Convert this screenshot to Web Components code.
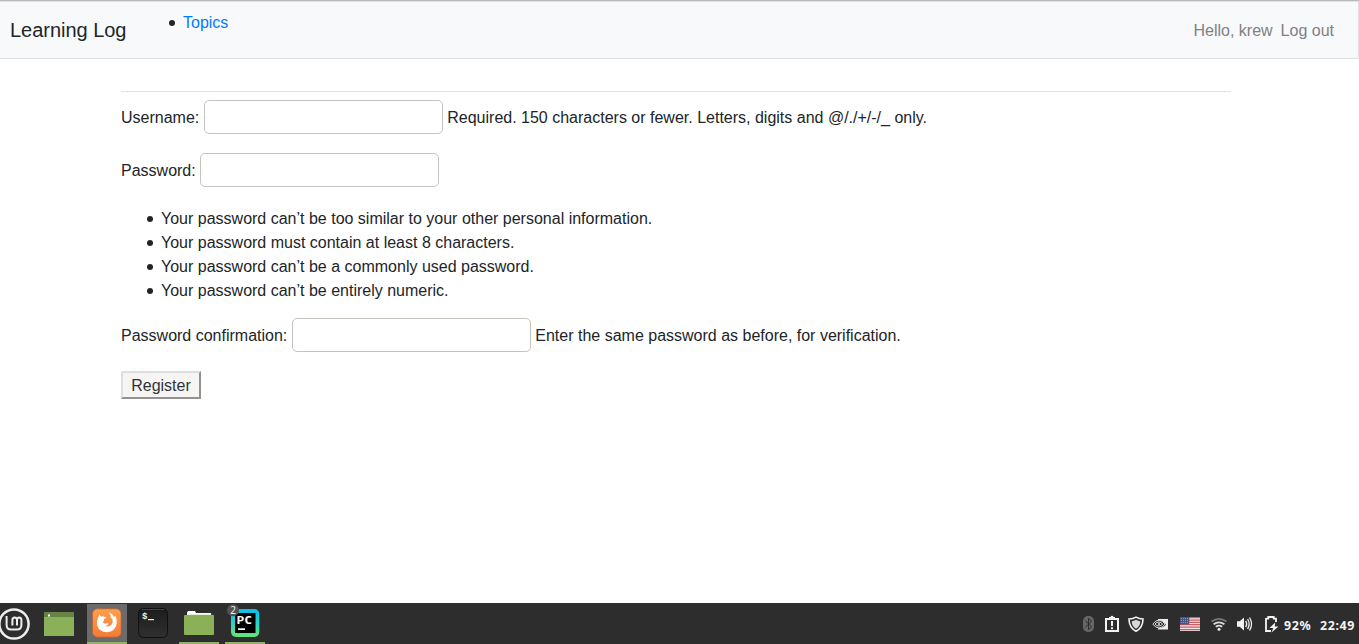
<!DOCTYPE html>
<html lang="en">
<head>
<meta charset="utf-8">
<title>Learning Log</title>
<style>
html,body{margin:0;height:100%;overflow:hidden;background:#fff}
body{font:16px/24px "Liberation Sans",Arial,sans-serif;color:#212529}
</style>
</head>
<body>
<app-desktop></app-desktop>
<script>
const define = (name, html, setup) => customElements.define(name, class extends HTMLElement {
  constructor() {
    super();
    const t = document.createElement('template');
    t.innerHTML = html;
    this.attachShadow({mode: 'open'}).append(t.content.cloneNode(true));
  }
  connectedCallback() { if (setup) setup(this, this.shadowRoot); }
});

const bullets = `li{list-style:none}
li::before{content:"";display:inline-block;width:6px;height:6px;border-radius:50%;background:#212529;margin:0 8px 0 -14px;vertical-align:2px}`;

define('nav-bar', `<style>
:host{display:flex;box-sizing:border-box;height:58px;background:#f8f9fa;border:1px solid #dee2e6;border-left:0;padding:8px 24px 8px 10px}
.brand{font-size:20px;line-height:30px;padding-top:5px;width:117px;white-space:nowrap;letter-spacing:-.03px}
ul{margin:1px 0 0 16px;padding:0 0 0 40px}
${bullets}
a{color:#007bff;text-decoration:none}
.user{margin-left:auto;display:flex;gap:8px;padding-top:9px;color:#808182}
</style>
<span class="brand">Learning Log</span>
<ul><li><a>Topics</a></li></ul>
<div class="user"><span>Hello, krew</span><span>Log out</span></div>`);

define('form-row', `<style>
:host{display:flex;align-items:center;height:34px;gap:4.5px;margin-bottom:19px;white-space:nowrap}
label,span{padding-top:2px}
input{box-sizing:border-box;width:239px;height:34px;margin:0;border:1px solid #c6c2bd;border-radius:5px;background:#fff;font:inherit;padding:0 6px;flex:none}
</style><label></label><input><span><slot></slot></span>`, (h, r) => {
  r.querySelector('label').textContent = h.getAttribute('label');
});

define('register-form', `<style>
:host{display:block;width:1110px;margin:32px 0 0 121px}
hr{margin:0 0 8px;border:0;border-top:1px solid #e0e0e0}
ul{margin:20px 0 15px;padding:0 0 0 40px}
${bullets}
form-row.tight{margin-bottom:0}
button{display:block;box-sizing:border-box;width:80px;height:28px;padding:1px 0 0;border:2px solid;border-color:#dedede #929292 #929292 #dedede;background:#f6f5f4;color:#2e3436;font:16px/23px "Liberation Sans",Arial,sans-serif}
</style>
<hr>
<form-row label="Username:">Required. 150 characters or fewer. Letters, digits and @/./+/-/_ only.</form-row>
<form-row class="tight" label="Password:"></form-row>
<ul>
<li>Your password can’t be too similar to your other personal information.</li>
<li>Your password must contain at least 8 characters.</li>
<li>Your password can’t be a commonly used password.</li>
<li>Your password can’t be entirely numeric.</li>
</ul>
<form-row label="Password confirmation:">Enter the same password as before, for verification.</form-row>
<button type="button">Register</button>`);

define('task-button', `<style>
:host{display:flex;flex:none;box-sizing:border-box;width:40px;height:40px;margin-top:1px}
:host([open]){border-bottom:2px solid #8fb368}
:host([active]){background:#6b6b6b}
</style><slot></slot>`);

define('task-bar', `<style>
:host{display:flex;height:41px;background:#2d2d2d;color:#fff;overflow:hidden}
svg{display:block;flex:none}
.apps{display:flex;gap:6px}
.menu{display:flex;width:81px;gap:14px}
.tray{display:flex;margin-left:auto;padding-right:4px}
.txt{font:bold 12.4px/41px "Noto Sans",sans-serif;padding-top:2px;white-space:nowrap;color:#f4f4f4;letter-spacing:.65px}
.pct{width:36px}.time{width:35px}
</style>
<div class="apps">
<div class="menu">
<svg width="30" height="41" viewBox="0 603 30 41" fill="none" stroke="#ededed"><circle cx="14" cy="624" r="14.6" stroke-width="2.5"/><path d="M6.6 616v9q0 4.5 4.5 4.5h5.8q4.5 0 4.5-4.5v-5q0-2.6-2.2-2.6t-2.2 2.6v5.5M17 620q0-2.6-2.3-2.6t-2.3 2.6v5.5" stroke-width="2"/></svg>
<svg width="30" height="41" viewBox="44 603 30 41"><path fill="#8bb158" d="M44 612h30v24H44z"/><path fill="#668344" d="M44 612h30v5H44z"/><path fill="#fff" d="M48 614.5h2v2h-2z"/></svg>
</div>
<task-button active open><svg width="40" height="38" viewBox="87 604 40 38"><defs><linearGradient id="f" x2="0" y2="1"><stop stop-color="#ffa04d"/><stop offset="1" stop-color="#f47b35"/></linearGradient></defs><rect x="92.5" y="608.8" width="28.6" height="28.4" rx="5" fill="url(#f)" stroke="#b85f2d" stroke-width=".7"/><path fill="#fff" d="M98.2 617.5l1.3-3 1.6 2.2q1.5-.7 3 .1l2.1.2q-.3 1.5-2.4 2.2l.3 1.4q-1.6.8-.9 2.2 1 1.2 3.3.4 1.6-.5 2.1.7-1.5 2-3.7 2.2 4 1.5 6.7-1.6 2-2.8.6-6.1l-1.4-.2q.5-3.1-1.9-5.6 3.5.8 5.4 4.3l1-1.5q2 3.8 1.5 8-1.5 8.3-9.8 8.8-8.4-.2-10-7.5-.6-4 1.2-7.2z"/></svg></task-button>
<task-button><svg width="40" height="40" viewBox="133 604 40 40"><defs><linearGradient id="t" x2="0" y2="1"><stop stop-color="#1c1c1c"/><stop offset="1" stop-color="#303030"/></linearGradient></defs><rect x="138.5" y="608.5" width="29" height="29" rx="5" fill="url(#t)" stroke="#101010"/><path d="M142 609.5h22" stroke="#4b4b4b" stroke-width=".8"/><text x="142" y="618.5" fill="#eee" font-family="Liberation Mono,monospace" font-weight="bold" font-size="9">$</text><path fill="#eee" d="M148 619h6v1.2h-6z"/></svg></task-button>
<task-button open><svg width="40" height="38" viewBox="179 604 40 38"><path fill="#fff" d="M187 618v-5.5l1-1.5h7l1 2h15v5z"/><path fill="#8bb158" d="M184 616q0-1 1-1h4l1.5-.3H213l1 .8v18.7q0 .8-1 .8h-28q-1 0-1-.8z"/></svg></task-button>
<task-button open><svg width="40" height="38" viewBox="225 604 40 38"><defs><linearGradient id="p" x2="0" y2="1"><stop stop-color="#0bbdf1"/><stop offset=".45" stop-color="#20d1ca"/><stop offset="1" stop-color="#65e674"/></linearGradient></defs><rect x="231" y="609" width="28.3" height="28" rx="5" fill="url(#p)"/><path d="M235 613h20.5v20H235z"/><text x="236.5" y="624" textLength="15.5" lengthAdjust="spacingAndGlyphs" fill="#fff" font-family="DejaVu Sans Mono,monospace" font-weight="bold" font-size="11">PC</text><path fill="#fff" d="M238 628.3h7v1.7h-7z"/><circle cx="233" cy="610.2" r="6" fill="#525252"/><text x="233" y="613.7" text-anchor="middle" fill="#eee" font-family="Noto Sans,sans-serif" font-size="10">2</text></svg></task-button>
</div>
<div class="tray">
<svg width="24" height="41" viewBox="1076 603 24 41"><rect x="1083" y="616" width="11" height="16" rx="5" fill="#666"/><path d="M1085.5 620.8l6 6-3 3v-11.6l3 3-6 6" fill="none" stroke="#2d2d2d"/></svg>
<svg width="24" height="41" viewBox="1100 603 24 41"><path d="M1106 619h12v12h-12z" fill="none" stroke="#f2f2f2" stroke-width="2"/><path fill="#f2f2f2" d="M1109 619v-2h1.5q.3-1.2 1.5-1.2t1.5 1.2h1.5v2zM1111 621h2v5h-2zM1111 627.2h2v2h-2z"/></svg>
<svg width="24" height="41" viewBox="1124 603 24 41"><path d="M1136 617.1q-3 1.9-7 1.9 0 8.5 7 12.3 7-3.8 7-12.3-4 0-7-1.9z" fill="none" stroke="#f4f4f4" stroke-width="1.6"/><path d="M1136 619.8q-2 1.2-4.3 1.4.2 5 4.3 7.6 4.1-2.6 4.3-7.6-2.3-.2-4.3-1.4z" fill="#d8d8d8"/></svg>
<svg width="27" height="41" viewBox="1148 603 27 41"><path fill="#eee" d="M1158 619h10v10.5h-10v-1.2q5 0 8-3.8-3.4-4.2-8-4.3z"/><path d="M1152.8 624q3.2-4 6.2-3.8 3.8.2 6 4-2.8 3.8-6 3.8-3.7-.2-6.2-4zM1155 624q1.6-2 3.8-2 2.3.1 3.8 2.1-1.8 2-3.8 1.9-2.2 0-3.8-2z" fill="#2d2d2d" stroke="#e0e0e0"/><circle cx="1159" cy="624" r="1" fill="#eee"/></svg>
<svg width="30" height="41" viewBox="1175 603 30 41"><path fill="#efe7e7" d="M1180 617h20v14h-20z"/><path d="M1180 617.6h20M1180 620h20M1180 622.3h20M1180 624.6h20M1180 627h20M1180 629.7h20" stroke="#d25b60" stroke-width="1.25"/><path fill="#485582" d="M1180 617h9.3v7.5h-9.3z"/><path d="M1181 618.5h8M1181 620.5h8M1181 622.5h8" stroke="#a7afc7" stroke-width=".7" stroke-dasharray="1 1"/></svg>
<svg width="27" height="41" viewBox="1205 603 27 41" fill="none" stroke-width="1.8"><path d="M1211.5 621.6q7.5-5.5 15 0" stroke="#777"/><path d="M1213.6 624.2q5.4-3.8 10.8 0M1215.8 626.8q3.2-2.2 6.4 0" stroke="#ddd"/><circle cx="1219" cy="629.2" r="1.5" fill="#eee"/></svg>
<svg width="26" height="41" viewBox="1232 603 26 41"><path fill="#f2f2f2" d="M1237 621.3h2.7l4.3-3.8v13l-4.3-3.8h-2.7z"/><path d="M1245.7 620.8q2 3.1 0 6.4M1247.6 619q3 5 0 10M1249.5 617.5q4 6.5 0 13" fill="none" stroke="#eee" stroke-width="1.3"/></svg>
<svg width="26" height="41" viewBox="1258 603 26 41"><path d="M1266 618.7h2.3v-1.7h5.4v1.7h2.3v3.3M1266 618v13h5" fill="none" stroke="#f4f4f4" stroke-width="1.8"/><path fill="#f4f4f4" d="M1275.2 622.5l-5.7 5.5h3.8l-1.8 4.5 7-6h-3.7z"/></svg>
<span class="txt pct">92%</span><span class="txt time">22:49</span>
</div>`);

define('app-desktop', `<style>
:host{display:flex;flex-direction:column;box-sizing:border-box;width:1359px;height:644px;border-top:1px solid #b9babb}
main{flex:1;min-height:0}
</style><nav-bar></nav-bar><main><register-form></register-form></main><task-bar></task-bar>`);
</script>
</body>
</html>
